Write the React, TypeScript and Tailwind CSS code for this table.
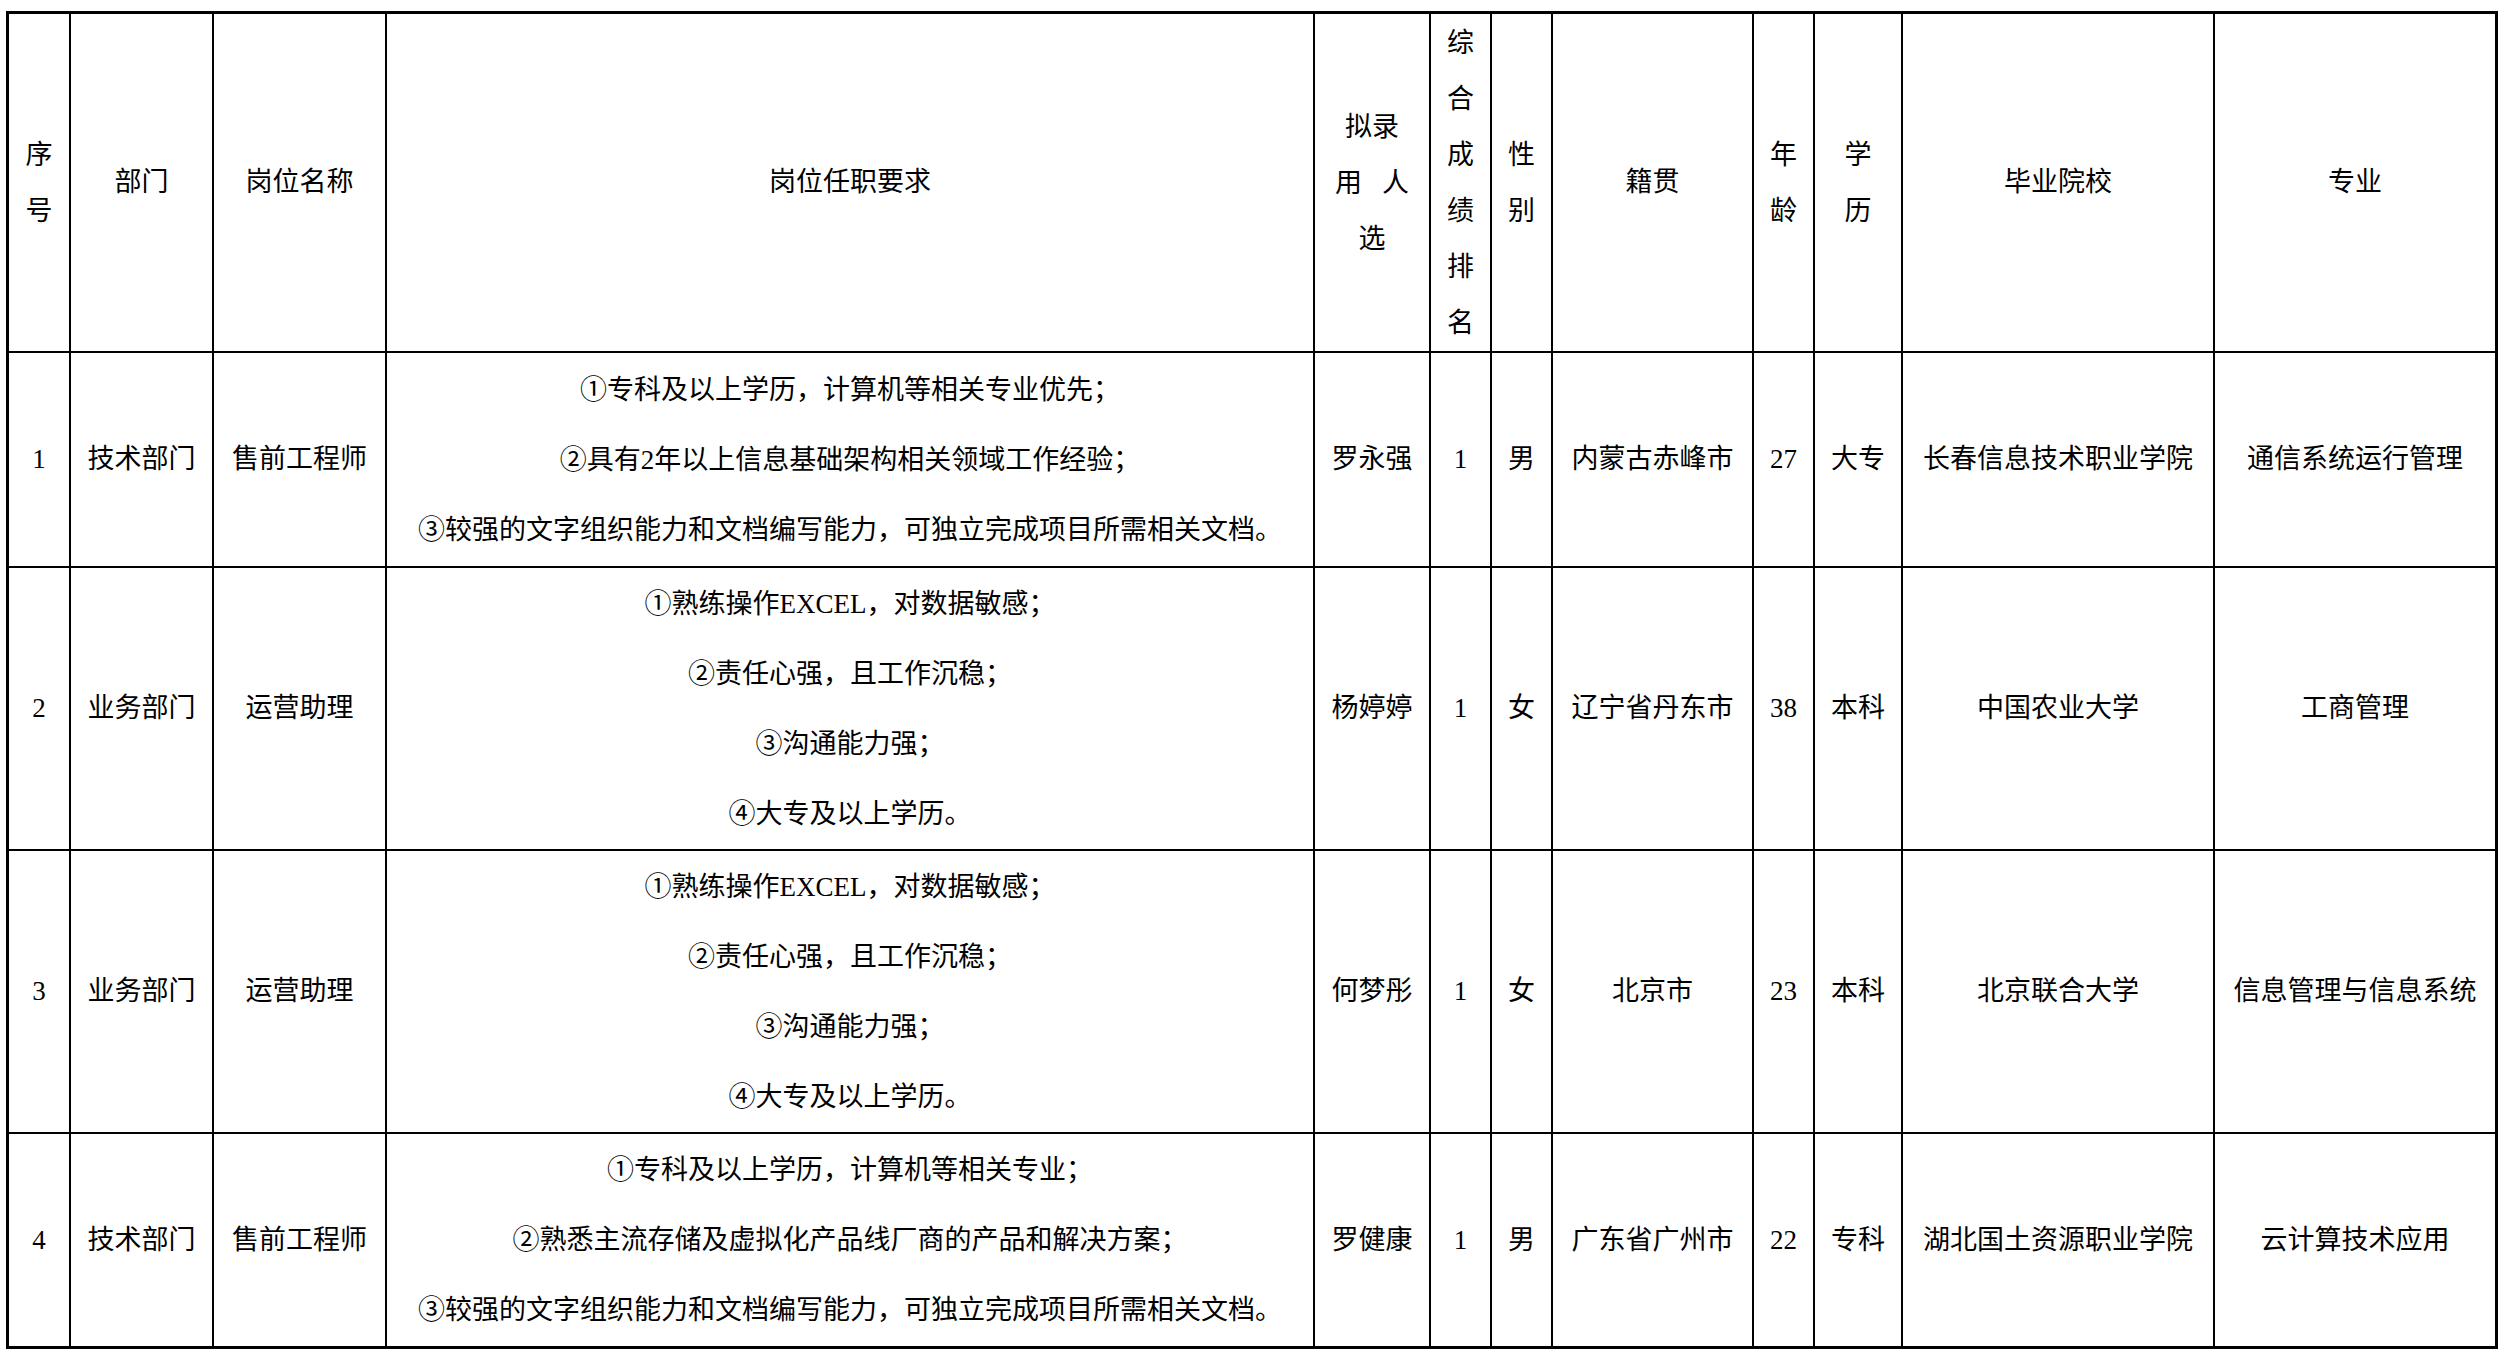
import React from "react";

type Row = {
  no: string;
  dept: string;
  post: string;
  reqs: string[];
  name: string;
  rank: string;
  sex: string;
  origin: string;
  age: string;
  edu: string;
  school: string;
  major: string;
};

const reqA = [
  "①熟练操作EXCEL，对数据敏感；",
  "②责任心强，且工作沉稳；",
  "③沟通能力强；",
  "④大专及以上学历。",
];

const rows: Row[] = [
  {
    no: "1",
    dept: "技术部门",
    post: "售前工程师",
    reqs: [
      "①专科及以上学历，计算机等相关专业优先；",
      "②具有2年以上信息基础架构相关领域工作经验；",
      "③较强的文字组织能力和文档编写能力，可独立完成项目所需相关文档。",
    ],
    name: "罗永强",
    rank: "1",
    sex: "男",
    origin: "内蒙古赤峰市",
    age: "27",
    edu: "大专",
    school: "长春信息技术职业学院",
    major: "通信系统运行管理",
  },
  {
    no: "2",
    dept: "业务部门",
    post: "运营助理",
    reqs: reqA,
    name: "杨婷婷",
    rank: "1",
    sex: "女",
    origin: "辽宁省丹东市",
    age: "38",
    edu: "本科",
    school: "中国农业大学",
    major: "工商管理",
  },
  {
    no: "3",
    dept: "业务部门",
    post: "运营助理",
    reqs: reqA,
    name: "何梦彤",
    rank: "1",
    sex: "女",
    origin: "北京市",
    age: "23",
    edu: "本科",
    school: "北京联合大学",
    major: "信息管理与信息系统",
  },
  {
    no: "4",
    dept: "技术部门",
    post: "售前工程师",
    reqs: [
      "①专科及以上学历，计算机等相关专业；",
      "②熟悉主流存储及虚拟化产品线厂商的产品和解决方案；",
      "③较强的文字组织能力和文档编写能力，可独立完成项目所需相关文档。",
    ],
    name: "罗健康",
    rank: "1",
    sex: "男",
    origin: "广东省广州市",
    age: "22",
    edu: "专科",
    school: "湖北国土资源职业学院",
    major: "云计算技术应用",
  },
];

const Cell = ({ children }: { children: React.ReactNode }) => (
  <div className="bg-white flex flex-col items-center justify-center text-center whitespace-nowrap overflow-hidden">
    {children}
  </div>
);

const Stack = ({ chars }: { chars: string[] }) => (
  <div className="flex flex-col items-center leading-[56px]">
    {chars.map((c, i) => (
      <span key={i}>{c}</span>
    ))}
  </div>
);

export default function App() {
  return (
    <div
      className="w-[2509px] h-[1354px] bg-white text-black text-[27px]"
      style={{ fontFamily: '"Liberation Serif", "Noto Sans CJK SC", serif' }}
    >
      <div className="pl-[6px] pt-[11px]">
        <div className="inline-grid bg-black border-[3px] border-black gap-[2px] grid-cols-[60px_141px_171px_926px_114px_59px_59px_199px_59px_86px_310px_280px] grid-rows-[337px_213px_281px_281px_212px]">
          <Cell>
            <Stack chars={["序", "号"]} />
          </Cell>
          <Cell>部门</Cell>
          <Cell>岗位名称</Cell>
          <Cell>岗位任职要求</Cell>
          <Cell>
            <div className="flex flex-col items-center leading-[56px]">
              <span>拟录</span>
              <span className="flex gap-[20px]">
                <span>用</span>
                <span>人</span>
              </span>
              <span>选</span>
            </div>
          </Cell>
          <Cell>
            <Stack chars={["综", "合", "成", "绩", "排", "名"]} />
          </Cell>
          <Cell>
            <Stack chars={["性", "别"]} />
          </Cell>
          <Cell>籍贯</Cell>
          <Cell>
            <Stack chars={["年", "龄"]} />
          </Cell>
          <Cell>
            <Stack chars={["学", "历"]} />
          </Cell>
          <Cell>毕业院校</Cell>
          <Cell>专业</Cell>

          {rows.map((r) => (
            <React.Fragment key={r.no}>
              <Cell>{r.no}</Cell>
              <Cell>{r.dept}</Cell>
              <Cell>{r.post}</Cell>
              <Cell>
                <div className="flex flex-col items-center leading-[70px]">
                  {r.reqs.map((q, i) => (
                    <span key={i}>{q}</span>
                  ))}
                </div>
              </Cell>
              <Cell>{r.name}</Cell>
              <Cell>{r.rank}</Cell>
              <Cell>{r.sex}</Cell>
              <Cell>{r.origin}</Cell>
              <Cell>{r.age}</Cell>
              <Cell>{r.edu}</Cell>
              <Cell>{r.school}</Cell>
              <Cell>{r.major}</Cell>
            </React.Fragment>
          ))}
        </div>
      </div>
    </div>
  );
}
